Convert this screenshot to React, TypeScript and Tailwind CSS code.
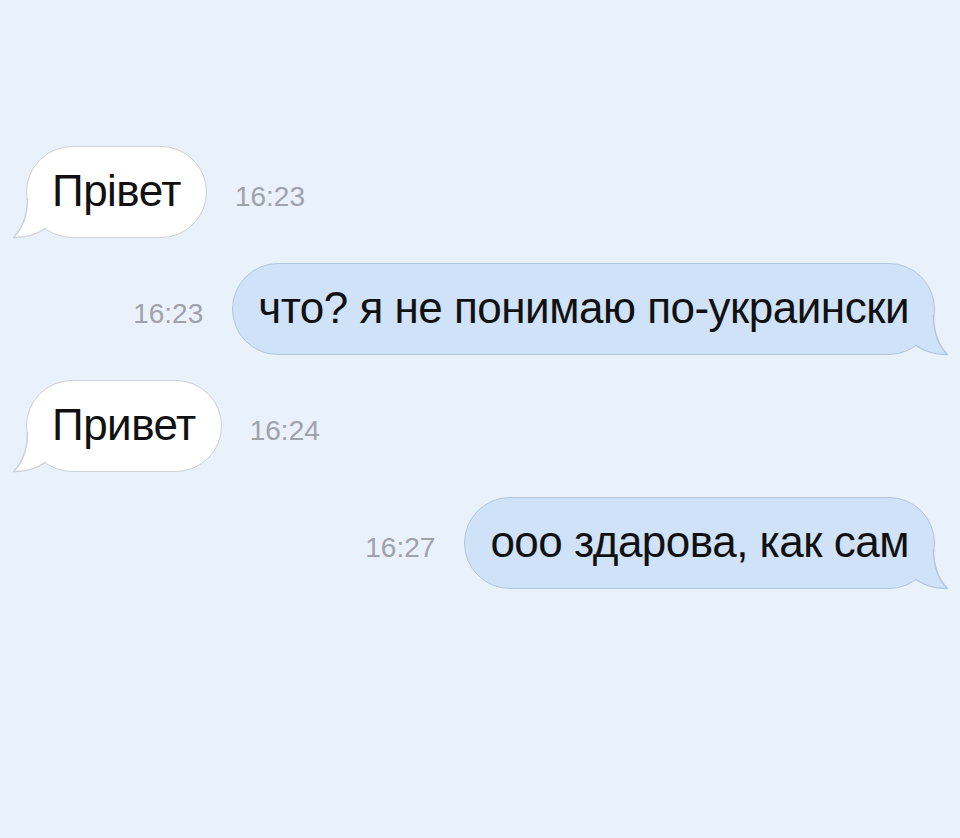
const FONT = "font-['Liberation_Sans','Helvetica_Neue',Arial,sans-serif]";

type Msg = { text: string; time: string; out: boolean };

const MESSAGES: Msg[] = [
  { text: "Прівет", time: "16:23", out: false },
  { text: "что? я не понимаю по-украински", time: "16:23", out: true },
  { text: "Привет", time: "16:24", out: false },
  { text: "ооо здарова, как сам", time: "16:27", out: true },
];

function Tail({ out }: { out: boolean }) {
  const fill = out ? "#cfe2f8" : "#ffffff";
  const stroke = out ? "#b3c6dd" : "#cdd1d6";
  return (
    <svg
      width="42"
      height="42"
      viewBox="0 0 42 42"
      className={`absolute bottom-[-3px] ${out ? "right-[-14px] -scale-x-100" : "left-[-14px]"}`}
    >
      <path d="M14.5 0 C14.5 20 8 32 0.5 39.5 C12 40 24 36 33 30 L40 0 Z" fill={fill} />
      <path
        d="M14.5 0 C14.5 20 8 32 0.5 39.5 C12 40 24 36 33 30"
        fill="none"
        stroke={stroke}
        strokeWidth="1.5"
      />
    </svg>
  );
}

function Bubble({ msg }: { msg: Msg }) {
  return (
    <div
      className={`relative flex h-[92px] items-center rounded-[46px] border-[1.5px] px-[25px] ${
        msg.out ? "border-[#b3c6dd] bg-[#cfe2f8]" : "border-[#cdd1d6] bg-white"
      }`}
    >
      <Tail out={msg.out} />
      <span className="relative whitespace-nowrap text-[44px] leading-none tracking-[-0.5px] text-[#111] pb-[2px]">
        {msg.text}
      </span>
    </div>
  );
}

function Time({ value }: { value: string }) {
  return <span className="mt-[10px] text-[28px] leading-none text-[#9ea3a9]">{value}</span>;
}

export default function App() {
  return (
    <div className={`min-h-[838px] w-[960px] bg-[#e9f1fb] pt-[146px] ${FONT}`}>
      <div className="flex flex-col gap-[25px]">
        {MESSAGES.map((m, i) =>
          m.out ? (
            <div key={i} className="flex items-center justify-end gap-[29px] pr-[25px]">
              <Time value={m.time} />
              <Bubble msg={m} />
            </div>
          ) : (
            <div key={i} className="flex items-center gap-[28px] pl-[26px]">
              <Bubble msg={m} />
              <Time value={m.time} />
            </div>
          )
        )}
      </div>
    </div>
  );
}
